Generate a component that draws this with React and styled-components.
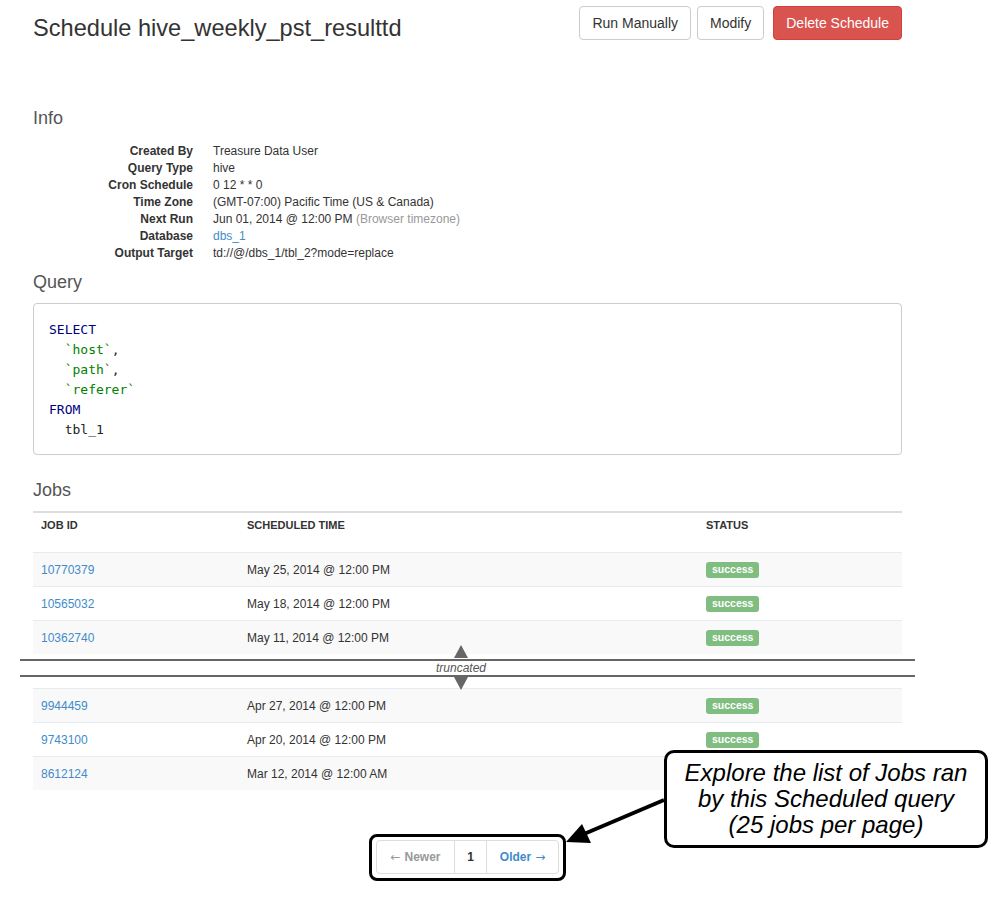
import styled, { createGlobalStyle } from 'styled-components';

const GlobalStyle = createGlobalStyle`
  body {
    margin: 0;
    background: #fff;
    font-family: 'Liberation Sans', Arial, sans-serif;
    color: #333;
  }
`;

const Page = styled.div`
  position: relative;
  width: 869px;
  padding: 6px 0 40px 33px;
`;

const Header = styled.div`
  display: flex;
  justify-content: space-between;
  align-items: flex-start;
`;

const Title = styled.h1`
  margin: 9px 0 0;
  font-size: 23.6px;
  line-height: 26px;
  font-weight: normal;
  color: #333;
`;

const ButtonGroup = styled.div`
  display: flex;
  gap: 6px;
`;

const Button = styled.button`
  height: 34px;
  padding: 0 12px;
  font-family: inherit;
  font-size: 14px;
  border-radius: 4px;
  border: 1px solid ${({ $danger }) => ($danger ? '#d43f3a' : '#ccc')};
  background: ${({ $danger }) => ($danger ? '#d9534f' : '#fff')};
  color: ${({ $danger }) => ($danger ? '#fff' : '#333')};
  margin-left: ${({ $danger }) => ($danger ? '3px' : '0')};
`;

const SectionTitle = styled.h3`
  margin: ${({ $top }) => $top}px 0 0;
  font-size: 18px;
  line-height: 20px;
  font-weight: normal;
  color: #555;
`;

const InfoList = styled.dl`
  display: grid;
  grid-template-columns: 160px 1fr;
  column-gap: 20px;
  margin: 15px 0 0;
  font-size: 12px;
  line-height: 17px;
`;

const Label = styled.dt`
  text-align: right;
  font-weight: bold;
`;

const Value = styled.dd`
  margin: 0;
`;

const Muted = styled.span`
  color: #999;
`;

const Link = styled.a`
  color: #428bca;
  text-decoration: none;
`;

const CodeBox = styled.pre`
  margin: 11px 0 0;
  padding: 16px 15px 14px;
  border: 1px solid #ccc;
  border-radius: 4px;
  background: #fff;
  font-family: 'DejaVu Sans Mono', monospace;
  font-size: 13px;
  line-height: 20px;
  color: #222;
`;

const Kw = styled.span`
  color: #000080;
`;

const Str = styled.span`
  color: #008000;
`;

const JobTable = styled.div`
  margin-top: 11px;
  border-top: 2px solid #dddddd;
  font-size: 12px;
`;

const Row = styled.div`
  display: grid;
  grid-template-columns: 206px 459px 1fr;
  height: ${({ $head }) => ($head ? '35px' : '33px')};
  align-items: ${({ $head }) => ($head ? 'start' : 'center')};
  padding-top: ${({ $head }) => ($head ? '4px' : '0')};
  box-sizing: content-box;
  background: ${({ $striped }) => ($striped ? '#f9f9f9' : '#fff')};
  border-top: ${({ $head }) => ($head ? 'none' : '1px solid #e6ebf0')};
  & > * {
    padding-left: 8px;
  }
`;

const HeadCell = styled.div`
  font-size: 11px;
  font-weight: bold;
  text-transform: uppercase;
  color: #333;
  line-height: 17px;
`;

const Cell = styled.div`
  color: #333;
`;

const Badge = styled.span`
  display: inline-block;
  padding: 2px 6px 3px;
  border-radius: 3px;
  background: #80bd80;
  color: #fff;
  font-size: 10.5px;
  font-weight: bold;
  line-height: 11px;
`;

const Truncation = styled.div`
  margin: 0 -13px;
  height: 34px;
  background: #fff;
  padding-top: 5px;
  box-sizing: border-box;
`;

const Band = styled.div`
  box-sizing: border-box;
  height: 18px;
  border-top: 2px solid #666;
  border-bottom: 2px solid #666;
  padding-left: 416px;
`;

const TruncLabel = styled.span`
  position: relative;
  display: inline-block;
  font-size: 12px;
  line-height: 14px;
  font-style: italic;
  color: #555;
  &::before,
  &::after {
    content: '';
    position: absolute;
    left: 50%;
    transform: translateX(-50%);
    border-left: 7px solid transparent;
    border-right: 7px solid transparent;
  }
  &::before {
    top: -16px;
    border-bottom: 13px solid #666;
  }
  &::after {
    top: 16px;
    border-top: 13px solid #666;
  }
`;

const PagerWrap = styled.div`
  display: flex;
  justify-content: center;
  margin-top: 44px;
`;

const Highlight = styled.div`
  border: 3px solid #000;
  border-radius: 8px;
  padding: 3px 4px 4px;
`;

const Pager = styled.div`
  display: flex;
  border: 1px solid #ddd;
  border-radius: 4px;
  height: 32px;
`;

const PageItem = styled.span`
  display: flex;
  align-items: center;
  justify-content: center;
  gap: 4px;
  width: ${({ $w }) => $w}px;
  font-size: 12px;
  font-weight: bold;
  color: ${({ $tone }) => ($tone === 'off' ? '#999' : $tone === 'link' ? '#428bca' : '#333')};
  & + & {
    border-left: 1px solid #ddd;
  }
`;

const ArrowGlyph = styled.span`
  font-family: 'DejaVu Sans', sans-serif;
  font-weight: normal;
  font-size: 12px;
`;

const Callout = styled.div`
  position: absolute;
  left: 664px;
  top: 750px;
  width: 318px;
  height: 92px;
  border: 3px solid #000;
  border-radius: 10px;
  background: #fff;
  display: flex;
  align-items: center;
  justify-content: center;
  text-align: center;
  font-size: 24px;
  line-height: 26px;
  font-style: italic;
  color: #000;
`;

const Arrow = styled.svg`
  position: absolute;
  left: 0;
  top: 0;
  pointer-events: none;
`;

const jobsTop = [
  ['10770379', 'May 25, 2014 @ 12:00 PM', 'success'],
  ['10565032', 'May 18, 2014 @ 12:00 PM', 'success'],
  ['10362740', 'May 11, 2014 @ 12:00 PM', 'success'],
];

const jobsBottom = [
  ['9944459', 'Apr 27, 2014 @ 12:00 PM', 'success'],
  ['9743100', 'Apr 20, 2014 @ 12:00 PM', 'success'],
  ['8612124', 'Mar 12, 2014 @ 12:00 AM', null],
];

function JobRow({ job, striped }) {
  const [id, time, status] = job;
  return (
    <Row $striped={striped}>
      <Cell>
        <Link href="#">{id}</Link>
      </Cell>
      <Cell>{time}</Cell>
      <Cell>{status && <Badge>{status}</Badge>}</Cell>
    </Row>
  );
}

export default function App() {
  return (
    <>
      <GlobalStyle />
      <Page>
        <Header>
          <Title>Schedule hive_weekly_pst_resulttd</Title>
          <ButtonGroup>
            <Button>Run Manually</Button>
            <Button>Modify</Button>
            <Button $danger>Delete Schedule</Button>
          </ButtonGroup>
        </Header>

        <SectionTitle $top={67}>Info</SectionTitle>
        <InfoList>
          <Label>Created By</Label>
          <Value>Treasure Data User</Value>
          <Label>Query Type</Label>
          <Value>hive</Value>
          <Label>Cron Schedule</Label>
          <Value>0 12 * * 0</Value>
          <Label>Time Zone</Label>
          <Value>(GMT-07:00) Pacific Time (US &amp; Canada)</Value>
          <Label>Next Run</Label>
          <Value>
            Jun 01, 2014 @ 12:00 PM <Muted>(Browser timezone)</Muted>
          </Value>
          <Label>Database</Label>
          <Value>
            <Link href="#">dbs_1</Link>
          </Value>
          <Label>Output Target</Label>
          <Value>td://@/dbs_1/tbl_2?mode=replace</Value>
        </InfoList>

        <SectionTitle $top={10}>Query</SectionTitle>
        <CodeBox>
          <Kw>SELECT</Kw>
          {'\n  '}
          <Str>`host`</Str>,{'\n  '}
          <Str>`path`</Str>,{'\n  '}
          <Str>`referer`</Str>
          {'\n'}
          <Kw>FROM</Kw>
          {'\n  tbl_1'}
        </CodeBox>

        <SectionTitle $top={25}>Jobs</SectionTitle>
        <JobTable>
          <Row $head>
            <HeadCell>Job ID</HeadCell>
            <HeadCell>Scheduled Time</HeadCell>
            <HeadCell>Status</HeadCell>
          </Row>
          {jobsTop.map((job, i) => (
            <JobRow key={job[0]} job={job} striped={i % 2 === 0} />
          ))}
          <Truncation>
            <Band>
              <TruncLabel>truncated</TruncLabel>
            </Band>
          </Truncation>
          {jobsBottom.map((job, i) => (
            <JobRow key={job[0]} job={job} striped={i % 2 === 0} />
          ))}
        </JobTable>

        <PagerWrap>
          <Highlight>
            <Pager>
              <PageItem $w={77} $tone="off">
                <ArrowGlyph>←</ArrowGlyph>Newer
              </PageItem>
              <PageItem $w={31}>1</PageItem>
              <PageItem $w={71} $tone="link">
                Older<ArrowGlyph>→</ArrowGlyph>
              </PageItem>
            </Pager>
          </Highlight>
        </PagerWrap>

        <Callout>
          Explore the list of Jobs ran
          <br />
          by this Scheduled query
          <br />
          (25 jobs per page)
        </Callout>
        <Arrow width="1000" height="900" viewBox="0 0 1000 900">
          <line x1="664" y1="800" x2="584" y2="834" stroke="#000" strokeWidth="4" />
          <polygon points="566,842 582,824 591,843" fill="#000" />
        </Arrow>
      </Page>
    </>
  );
}
